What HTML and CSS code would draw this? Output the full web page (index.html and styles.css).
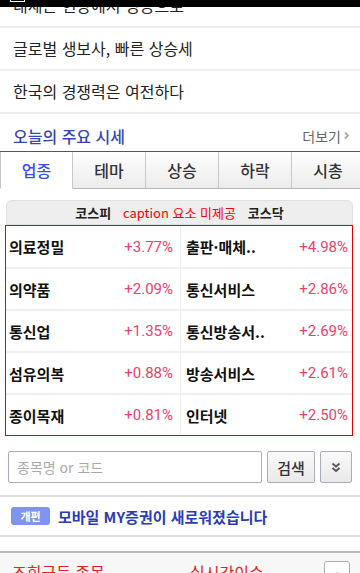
FILE: index.html
```html
<!DOCTYPE html>
<html lang="ko">
<head>
<meta charset="utf-8">
<link rel="stylesheet" href="styles.css">
</head>
<body>
<div class="statusbar"><span class="sb-icon"></span></div>
<ul class="news">
  <li>내세는 현장에서 성공으로</li>
  <li>글로벌 생보사, 빠른 상승세</li>
  <li>한국의 경쟁력은 여전하다</li>
</ul>
<div class="sec-head">
  <h2 class="sec-title">오늘의 주요 시세</h2>
  <a class="more">더보기<svg class="more-ico" width="6" height="9" viewBox="0 0 6 9"><path d="M1 1.5 L4 4.5 L1 7.5" fill="none" stroke="#aaa" stroke-width="1.8"/></svg></a>
</div>
<div class="tabs">
  <a class="tab on">업종</a><a class="tab">테마</a><a class="tab">상승</a><a class="tab">하락</a><a class="tab">시총</a>
</div>
<div class="market">
  <div class="caption">
    <span class="cap-half">코스피</span><span class="cap-half">코스닥</span>
    <em class="cap-note">caption 요소 미제공</em>
  </div>
  <div class="grid">
    <div class="cell"><span class="nm">의료정밀</span><span class="pct">+3.77%</span></div>
    <div class="cell r"><span class="nm">출판·매체..</span><span class="pct">+4.98%</span></div>
    <div class="cell"><span class="nm">의약품</span><span class="pct">+2.09%</span></div>
    <div class="cell r"><span class="nm">통신서비스</span><span class="pct">+2.86%</span></div>
    <div class="cell"><span class="nm">통신업</span><span class="pct">+1.35%</span></div>
    <div class="cell r"><span class="nm">통신방송서..</span><span class="pct">+2.69%</span></div>
    <div class="cell"><span class="nm">섬유의복</span><span class="pct">+0.88%</span></div>
    <div class="cell r"><span class="nm">방송서비스</span><span class="pct">+2.61%</span></div>
    <div class="cell"><span class="nm">종이목재</span><span class="pct">+0.81%</span></div>
    <div class="cell r"><span class="nm">인터넷</span><span class="pct">+2.50%</span></div>
  </div>
</div>
<div class="search">
  <div class="input">종목명 or 코드</div>
  <button class="btn btn-search">검색</button>
  <button class="btn btn-more"><svg width="10" height="11" viewBox="0 0 10 11"><path d="M1.5 1.5 L5 4.5 L8.5 1.5 M1.5 6 L5 9 L8.5 6" fill="none" stroke="#555" stroke-width="1.8"/></svg></button>
</div>
<div class="notice">
  <span class="badge">개편</span>
  <span class="notice-text">모바일 MY증권이 새로워졌습니다</span>
</div>
<div class="bottom">
  <span class="b1">조회급등 종목</span>
  <span class="b2">실시간이슈</span>
  <button class="up"><svg width="10" height="6" viewBox="0 0 10 6"><path d="M1.5 5 L5 1.5 L8.5 5" fill="none" stroke="#555" stroke-width="1.8"/></svg></button>
</div>
</body>
</html>
```
FILE: styles.css
```css
* { box-sizing: border-box; }
html, body { margin: 0; padding: 0; }
body {
  width: 360px;
  overflow: hidden;
  background: #fff;
  font-family: "Noto Sans CJK KR", "Noto Sans", sans-serif;
  color: #222;
}
.statusbar {
  position: absolute;
  top: 0; left: 0;
  width: 360px;
  height: 7px;
  background: #000;
  z-index: 5;
  overflow: hidden;
}
.sb-icon {
  position: absolute;
  left: 10px; top: -10px;
  width: 15px; height: 12px;
  border: 1px solid #fff;
}
.news {
  list-style: none;
  margin: -15px 0 0 0;
  padding: 0;
}
.news li {
  height: 43px;
  line-height: 41px;
  padding-left: 13px;
  font-size: 16px;
  color: #222;
  border-bottom: 2px solid #eee;
}
.sec-head {
  height: 37px;
  padding: 6px 13px 0 13px;
  display: flex;
  align-items: center;
  justify-content: space-between;
}
.sec-title {
  margin: 0;
  font-size: 16px;
  font-weight: 500;
  color: #3446b8;
}
.more {
  font-size: 14px;
  color: #666;
  display: flex;
  align-items: center;
  gap: 3px;
  margin-right: -3px;
}
.tabs {
  display: flex;
  border-top: 1px solid #555;
  height: 38px;
  overflow: hidden;
}
.tab {
  flex: 0 0 73px;
  height: 37px;
  display: flex;
  align-items: center;
  justify-content: center;
  font-size: 16px;
  font-weight: 500;
  color: #333;
  background: linear-gradient(#fefefe, #ececec);
  border-right: 1px solid #c8c8c8;
  border-bottom: 1px solid #b8b8b8;
}
.tab.on {
  background: #fff;
  color: #3a4ee6;
  border-left: 1px solid #c8c8c8;
  border-bottom-color: #fff;
}
.market {
  margin: 11px 7px 0 5px;
}
.caption {
  position: relative;
  margin-left: 1px;
  height: 25px;
  background: #eee;
  border: 1px solid #e0e0e0;
  border-radius: 6px 6px 0 0;
  display: flex;
  align-items: center;
}
.cap-half {
  flex: 1;
  text-align: center;
  font-size: 13px;
  font-weight: 700;
  color: #222;
}
.cap-note {
  position: absolute;
  left: 0; right: 0; top: 0; bottom: 0;
  display: flex;
  align-items: center;
  justify-content: center;
  font-style: normal;
  font-size: 13px;
  color: #f00;
}
.grid {
  display: grid;
  grid-template-columns: 174px 1fr;
  border: 1px solid #e60000;
}
.cell {
  height: 42px;
  display: flex;
  align-items: center;
  justify-content: space-between;
  padding: 0 7px 0 3px;
  border-top: 2px solid #f0f0f0;
}
.cell:nth-child(-n+2) { border-top: none; height: 41px; }
.cell.r {
  border-left: 1px solid #eee;
  padding: 0 4px 0 5px;
}
.nm {
  font-size: 15px;
  font-weight: 700;
  color: #111;
}
.pct {
  font-family: Roboto, "Noto Sans", sans-serif;
  font-size: 15px;
  color: #f0406a;
}
.search {
  display: flex;
  gap: 5px;
  padding: 15px 8px 12px 8px;
  border-bottom: 2px solid #ddd;
}
.input {
  flex: 0 0 254px;
  height: 32px;
  border: 1px solid #a9aeb5;
  border-radius: 2px;
  padding-left: 8px;
  display: flex;
  align-items: center;
  font-size: 14px;
  color: #aaa;
}
.btn {
  height: 32px;
  border: 1px solid #a9aeb5;
  border-radius: 2px;
  background: linear-gradient(#fafafa, #e9e9e9);
  padding: 0;
  font-family: inherit;
  display: flex;
  align-items: center;
  justify-content: center;
}
.btn-search {
  width: 48px;
  font-size: 15px;
  font-weight: 500;
  color: #333;
}
.btn-more { width: 32px; }
.notice {
  height: 40px;
  display: flex;
  align-items: center;
  gap: 8px;
  padding-left: 11px;
  border-bottom: 2px solid #ddd;
}
.badge {
  width: 39px;
  height: 18px;
  border-radius: 3px;
  background: #7f94ef;
  color: #fff;
  font-size: 11px;
  font-weight: 700;
  display: flex;
  align-items: center;
  justify-content: center;
}
.notice-text {
  font-size: 15px;
  font-weight: 700;
  color: #2b3cb3;
}
.bottom {
  margin-top: 14px;
  border-top: 2px solid #bbb;
  background: #f7f7f7;
  height: 40px;
  position: relative;
  display: flex;
  align-items: flex-start;
  padding: 7px 0 0 12px;
  font-size: 16px;
  color: #e62222;
}
.b1 { width: 178px; }
.up {
  margin-left: auto;
  margin-right: 10px;
  margin-top: 1px;
  width: 26px;
  height: 28px;
  border: 1px solid #aaa;
  border-radius: 3px;
  background: #fff;
  display: flex;
  align-items: center;
  justify-content: center;
  padding: 0;
}
```
